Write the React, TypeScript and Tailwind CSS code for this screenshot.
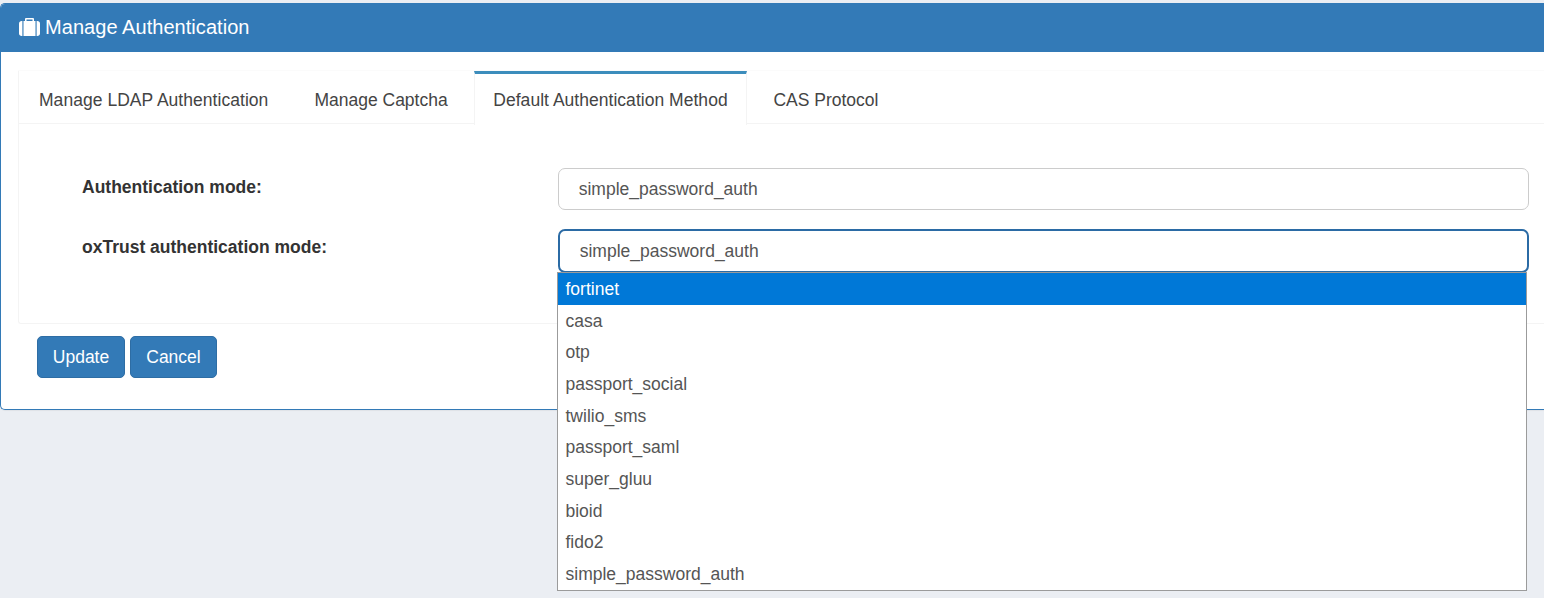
const tabs = [
  { label: "Manage LDAP Authentication", box: "w-[273px] pl-[20px] tracking-[0.04px]" },
  { label: "Manage Captcha", box: "w-[182px] pl-[22.4px]" },
  { label: "Default Authentication Method", box: "w-[273px] pl-[18.3px] tracking-[0.03px]", active: true },
  { label: "CAS Protocol", box: "flex-1 pl-[26.4px]" },
];

const methods = [
  "fortinet",
  "casa",
  "otp",
  "passport_social",
  "twilio_sms",
  "passport_saml",
  "super_gluu",
  "bioid",
  "fido2",
  "simple_password_auth",
];

function Suitcase() {
  return (
    <svg viewBox="0 0 1792 1536" className="mb-[2px] h-[18px] w-[21px] shrink-0 fill-white" aria-hidden="true">
      <path d="M640 256h512v-128h-512v128zM288 256v1280h-64q-92 0-158-66t-66-158v-832q0-92 66-158t158-66h64zM1408 256v1280h-1024v-1280h128v-160q0-40 28-68t68-28h576q40 0 68 28t28 68v160h128zM1792 480v832q0 92-66 158t-158 66h-64v-1280h64q92 0 158 66t66 158z" />
    </svg>
  );
}

function MethodMenu() {
  return (
    <ul className="absolute -left-px top-[43px] z-10 h-[319px] w-[970px] border border-[#9b9b9b] bg-white text-[#555]">
      {methods.map((name, i) => (
        <li
          key={name}
          className={`flex h-[31.67px] items-center pl-[7.5px] pt-[1.4px] ${i === 0 ? "bg-[#0078d7] text-white" : ""}`}
        >
          {name}
        </li>
      ))}
    </ul>
  );
}

export default function App() {
  return (
    <div className="h-[598px] overflow-hidden bg-[#ebeef3] pt-[3px] font-['Liberation_Sans',Arial,sans-serif] text-[17.5px] leading-[25px] text-[#333]">
      <section className="h-[407px] rounded-l-[5px] border border-r-0 border-[#337ab7] bg-white shadow-[0_1px_1px_rgba(0,0,0,0.05)]">
        <header className="flex h-12 items-center gap-[5px] rounded-tl-[4px] bg-[#337ab7] pl-[18px] text-white">
          <Suitcase />
          <h1 className="pb-[2px] text-[20px] tracking-[0.05px]">Manage Authentication</h1>
        </header>

        <div className="ml-[17px] mt-[19px] h-[253px] rounded-bl-[3px] border-b border-l border-[#f4f4f4] shadow-[0_-1px_1px_rgba(0,0,0,0.02)]">
          <nav className="flex h-[53px] text-[#444]">
            {tabs.map((tab) => (
              <div
                key={tab.label}
                className={`flex shrink-0 items-center whitespace-nowrap ${tab.box} ${
                  tab.active
                    ? "h-[54px] border-x border-t-[3px] border-x-[#f4f4f4] border-t-[#3c8dbc] bg-white pt-[2px]"
                    : "border-b border-[#f4f4f4] pt-[6px]"
                }`}
              >
                {tab.label}
              </div>
            ))}
          </nav>

          <div className="grid grid-cols-[476px_971px] pl-[63px] pt-[44px]">
            <label className="h-[61px] pt-[7px] font-bold">Authentication mode:</label>
            <div className="flex h-[42px] items-center rounded-[7px] border border-[#ccc] pl-[19.7px] text-[#555]">
              simple_password_auth
            </div>
            <label className="pt-[6px] font-bold">oxTrust authentication mode:</label>
            <div className="relative">
              <div className="flex h-[44px] items-center rounded-[7px] border-2 border-[#2b6ba5] pl-[19.7px] text-[#555]">
                simple_password_auth
              </div>
              <MethodMenu />
            </div>
          </div>
        </div>

        <div className="mt-3 flex gap-[5px] pl-9">
          <button className="h-[42px] w-[88px] rounded-[5px] border border-[#2e6da4] bg-[#337ab7] text-white">
            Update
          </button>
          <button className="h-[42px] w-[87px] rounded-[5px] border border-[#2e6da4] bg-[#337ab7] text-white">
            Cancel
          </button>
        </div>
      </section>
    </div>
  );
}
